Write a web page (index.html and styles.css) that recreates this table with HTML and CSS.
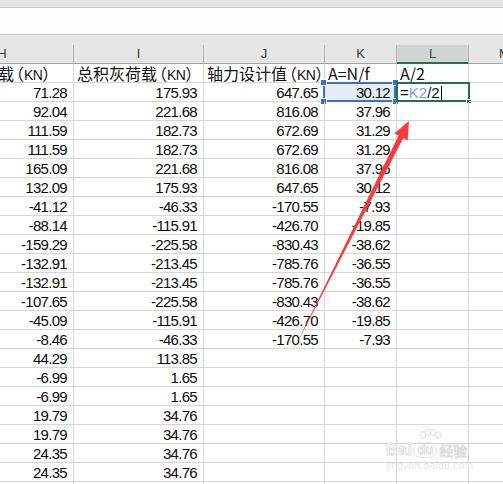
FILE: index.html
```html
<!DOCTYPE html>
<html lang="zh">
<head>
<meta charset="utf-8">
<title>Sheet</title>
<link rel="stylesheet" href="styles.css">
</head>
<body>
<div class="app">
  <div class="chrome-top"></div>
  <div class="formula-bar"></div>
  <div class="chrome-gap"></div>
  <div class="sheet">
    <div class="col">H</div><div class="col">I</div><div class="col">J</div><div class="col">K</div><div class="col col-active">L</div><div class="col">M</div>

    <div class="c t">楼面活荷载<span class="lp">（</span><span class="u">KN</span>）</div><div class="c t">总积灰荷载<span class="lp">（</span><span class="u">KN</span>）</div><div class="c t">轴力设计值<span class="lp">（</span><span class="u">KN</span>）</div><div class="c t">A=N/f</div><div class="c t">A/2</div><div class="c"></div>

    <div class="c n">71.28</div><div class="c n">175.93</div><div class="c n">647.65</div><div class="c n sel">30.12<span class="sel-box"><i class="h tl"></i><i class="h tr"></i><i class="h bl"></i><i class="h br"></i></span></div><div class="c f active">=<span class="ref">K2</span>/2<span class="caret"></span><span class="act-box"><i class="fill"></i></span></div><div class="c"></div>

    <div class="c n">92.04</div><div class="c n">221.68</div><div class="c n">816.08</div><div class="c n">37.96</div><div class="c"></div><div class="c"></div>
    <div class="c n">111.59</div><div class="c n">182.73</div><div class="c n">672.69</div><div class="c n">31.29</div><div class="c"></div><div class="c"></div>
    <div class="c n">111.59</div><div class="c n">182.73</div><div class="c n">672.69</div><div class="c n">31.29</div><div class="c"></div><div class="c"></div>
    <div class="c n">165.09</div><div class="c n">221.68</div><div class="c n">816.08</div><div class="c n">37.96</div><div class="c"></div><div class="c"></div>
    <div class="c n">132.09</div><div class="c n">175.93</div><div class="c n">647.65</div><div class="c n">30.12</div><div class="c"></div><div class="c"></div>
    <div class="c n">-41.12</div><div class="c n">-46.33</div><div class="c n">-170.55</div><div class="c n">-7.93</div><div class="c"></div><div class="c"></div>
    <div class="c n">-88.14</div><div class="c n">-115.91</div><div class="c n">-426.70</div><div class="c n">-19.85</div><div class="c"></div><div class="c"></div>
    <div class="c n">-159.29</div><div class="c n">-225.58</div><div class="c n">-830.43</div><div class="c n">-38.62</div><div class="c"></div><div class="c"></div>
    <div class="c n">-132.91</div><div class="c n">-213.45</div><div class="c n">-785.76</div><div class="c n">-36.55</div><div class="c"></div><div class="c"></div>
    <div class="c n">-132.91</div><div class="c n">-213.45</div><div class="c n">-785.76</div><div class="c n">-36.55</div><div class="c"></div><div class="c"></div>
    <div class="c n">-107.65</div><div class="c n">-225.58</div><div class="c n">-830.43</div><div class="c n">-38.62</div><div class="c"></div><div class="c"></div>
    <div class="c n">-45.09</div><div class="c n">-115.91</div><div class="c n">-426.70</div><div class="c n">-19.85</div><div class="c"></div><div class="c"></div>
    <div class="c n">-8.46</div><div class="c n">-46.33</div><div class="c n">-170.55</div><div class="c n">-7.93</div><div class="c"></div><div class="c"></div>
    <div class="c n">44.29</div><div class="c n">113.85</div><div class="c"></div><div class="c"></div><div class="c"></div><div class="c"></div>
    <div class="c n">-6.99</div><div class="c n">1.65</div><div class="c"></div><div class="c"></div><div class="c"></div><div class="c"></div>
    <div class="c n">-6.99</div><div class="c n">1.65</div><div class="c"></div><div class="c"></div><div class="c"></div><div class="c"></div>
    <div class="c n">19.79</div><div class="c n">34.76</div><div class="c"></div><div class="c"></div><div class="c"></div><div class="c"></div>
    <div class="c n">19.79</div><div class="c n">34.76</div><div class="c"></div><div class="c"></div><div class="c"></div><div class="c"></div>
    <div class="c n">24.35</div><div class="c n">34.76</div><div class="c"></div><div class="c"></div><div class="c"></div><div class="c"></div>
    <div class="c n">24.35</div><div class="c n">34.76</div><div class="c"></div><div class="c"></div><div class="c"></div><div class="c"></div>
    <div class="c"></div><div class="c"></div><div class="c"></div><div class="c"></div><div class="c"></div><div class="c"></div>
  </div>

  <div class="watermark">
    <svg class="paw" width="26" height="18" viewBox="0 0 26 18">
      <g fill="none" stroke="#e4e4e4" stroke-width="1.2">
        <ellipse cx="6" cy="6" rx="2.6" ry="3.2"/>
        <ellipse cx="11" cy="3.5" rx="2.6" ry="3"/>
        <ellipse cx="16" cy="3.5" rx="2.6" ry="3"/>
        <ellipse cx="21" cy="6" rx="2.6" ry="3.2"/>
      </g>
    </svg>
    <div class="wm-row"><span class="wm-bai">Bai</span><span class="wm-du">du</span><span class="wm-jy">经验</span></div>
    <div class="wm-url">jingyan.baidu.com</div>
  </div>

  <svg class="arrow" width="503" height="484" viewBox="0 0 503 484">
    <polygon points="292,353 398.6,135.6 394.2,133.4 409,121 407.6,140.4 403.2,138.2" fill="#f53b3b"/>
  </svg>
</div>
</body>
</html>
```

FILE: styles.css
```css
html, body {
  margin: 0;
  padding: 0;
  background: #ffffff;
}

.app {
  position: relative;
  width: 503px;
  height: 484px;
  overflow: hidden;
  font-family: "Liberation Sans", "Noto Sans CJK SC", sans-serif;
  color: #111;
}

.chrome-top {
  height: 7px;
  background: #e6e6e6;
  border-bottom: 1px solid #c4c4c4;
}

.formula-bar {
  height: 26px;
  background: #fdfdfd;
  border-bottom: 1px solid #c4c4c4;
}

.chrome-gap {
  height: 10px;
  background: #e6e6e6;
}

.sheet {
  display: grid;
  grid-template-columns: 143px 130px 121px 72px 72px 72px;
  grid-auto-rows: 19px;
  margin-left: -69px;
  width: 610px;
}

.col {
  box-sizing: border-box;
  height: 19px;
  background: #e6e6e6;
  border-right: 1px solid #b5b5b5;
  border-bottom: 1px solid #a3a3a3;
  text-align: center;
  font-size: 13px;
  line-height: 18px;
  color: #3a3a3a;
}

.col-active {
  background: #d3d3d3;
  border-bottom-color: #217346;
  box-shadow: inset 0 -1px 0 #217346;
  color: #245c3c;
}

.c {
  position: relative;
  box-sizing: border-box;
  height: 19px;
  border-right: 1px solid #d6d6d6;
  border-bottom: 1px solid #d6d6d6;
  white-space: nowrap;
  overflow: visible;
  font-size: 15px;
  line-height: 18px;
  padding-top: 1px;
}

.n {
  text-align: right;
  padding-right: 6px;
  letter-spacing: -0.7px;
  color: #0c0c0c;
}

.t {
  font-family: "Noto Sans CJK SC", sans-serif;
  font-size: 16px;
  padding-left: 3px;
  padding-top: 0;
  overflow: hidden;
  color: #111;
}

.lp {
  margin-left: -6px;
}

.u {
  font-family: "Liberation Sans", sans-serif;
  font-size: 14px;
  letter-spacing: -0.6px;
}

.f {
  padding-left: 3px;
  color: #111;
}

.ref {
  color: #7f9de6;
}

.caret {
  display: inline-block;
  width: 1px;
  height: 14px;
  background: #000;
  vertical-align: -2px;
  margin-left: 1px;
}

.sel {
  background: #e5edf8;
}

.sel-box {
  position: absolute;
  left: -2px;
  top: -1px;
  width: 73px;
  height: 20px;
  box-sizing: border-box;
  border: 2px solid #3b6fcc;
}

.h {
  position: absolute;
  width: 5px;
  height: 5px;
  background: #3b6fcc;
  border: 1px solid #ffffff;
}

.tl { left: -5px; top: -5px; }
.tr { right: -5px; top: -5px; }
.bl { left: -5px; bottom: -5px; }
.br { right: -5px; bottom: -5px; }

.act-box {
  position: absolute;
  left: -1px;
  top: -1px;
  width: 74px;
  height: 20px;
  box-sizing: border-box;
  border: 2px solid #217346;
}

.fill {
  position: absolute;
  right: -3px;
  bottom: -3px;
  width: 4px;
  height: 3px;
  background: #217346;
  border-left: 1px solid #fff;
  border-top: 1px solid #fff;
}

.watermark {
  position: absolute;
  left: 386px;
  top: 429px;
  width: 90px;
  pointer-events: none;
}

.paw {
  display: block;
  margin-left: 31px;
}

.wm-row {
  display: flex;
  align-items: center;
  margin-top: -5px;
  height: 16px;
}

.wm-bai {
  font-family: "Liberation Sans", sans-serif;
  font-weight: bold;
  font-size: 16px;
  color: #ffffff;
  -webkit-text-stroke: 1px #e0e0e0;
  letter-spacing: 0.5px;
}

.wm-du {
  font-family: "Liberation Sans", sans-serif;
  font-weight: bold;
  font-size: 13px;
  color: #ffffff;
  -webkit-text-stroke: 1px #e0e0e0;
  border: 1px solid #e4e4e4;
  border-radius: 7px;
  padding: 0 3px;
  line-height: 14px;
  margin-left: 1px;
}

.wm-jy {
  font-family: "Noto Sans CJK SC", sans-serif;
  font-size: 14px;
  color: #ffffff;
  -webkit-text-stroke: 1px #dedede;
  margin-left: 2px;
  line-height: 16px;
}

.wm-url {
  font-family: "Liberation Sans", sans-serif;
  font-size: 10px;
  color: #e6e6e6;
  margin-top: 2px;
  letter-spacing: 0.4px;
}

.arrow {
  position: absolute;
  left: 0;
  top: 0;
  pointer-events: none;
}
```
